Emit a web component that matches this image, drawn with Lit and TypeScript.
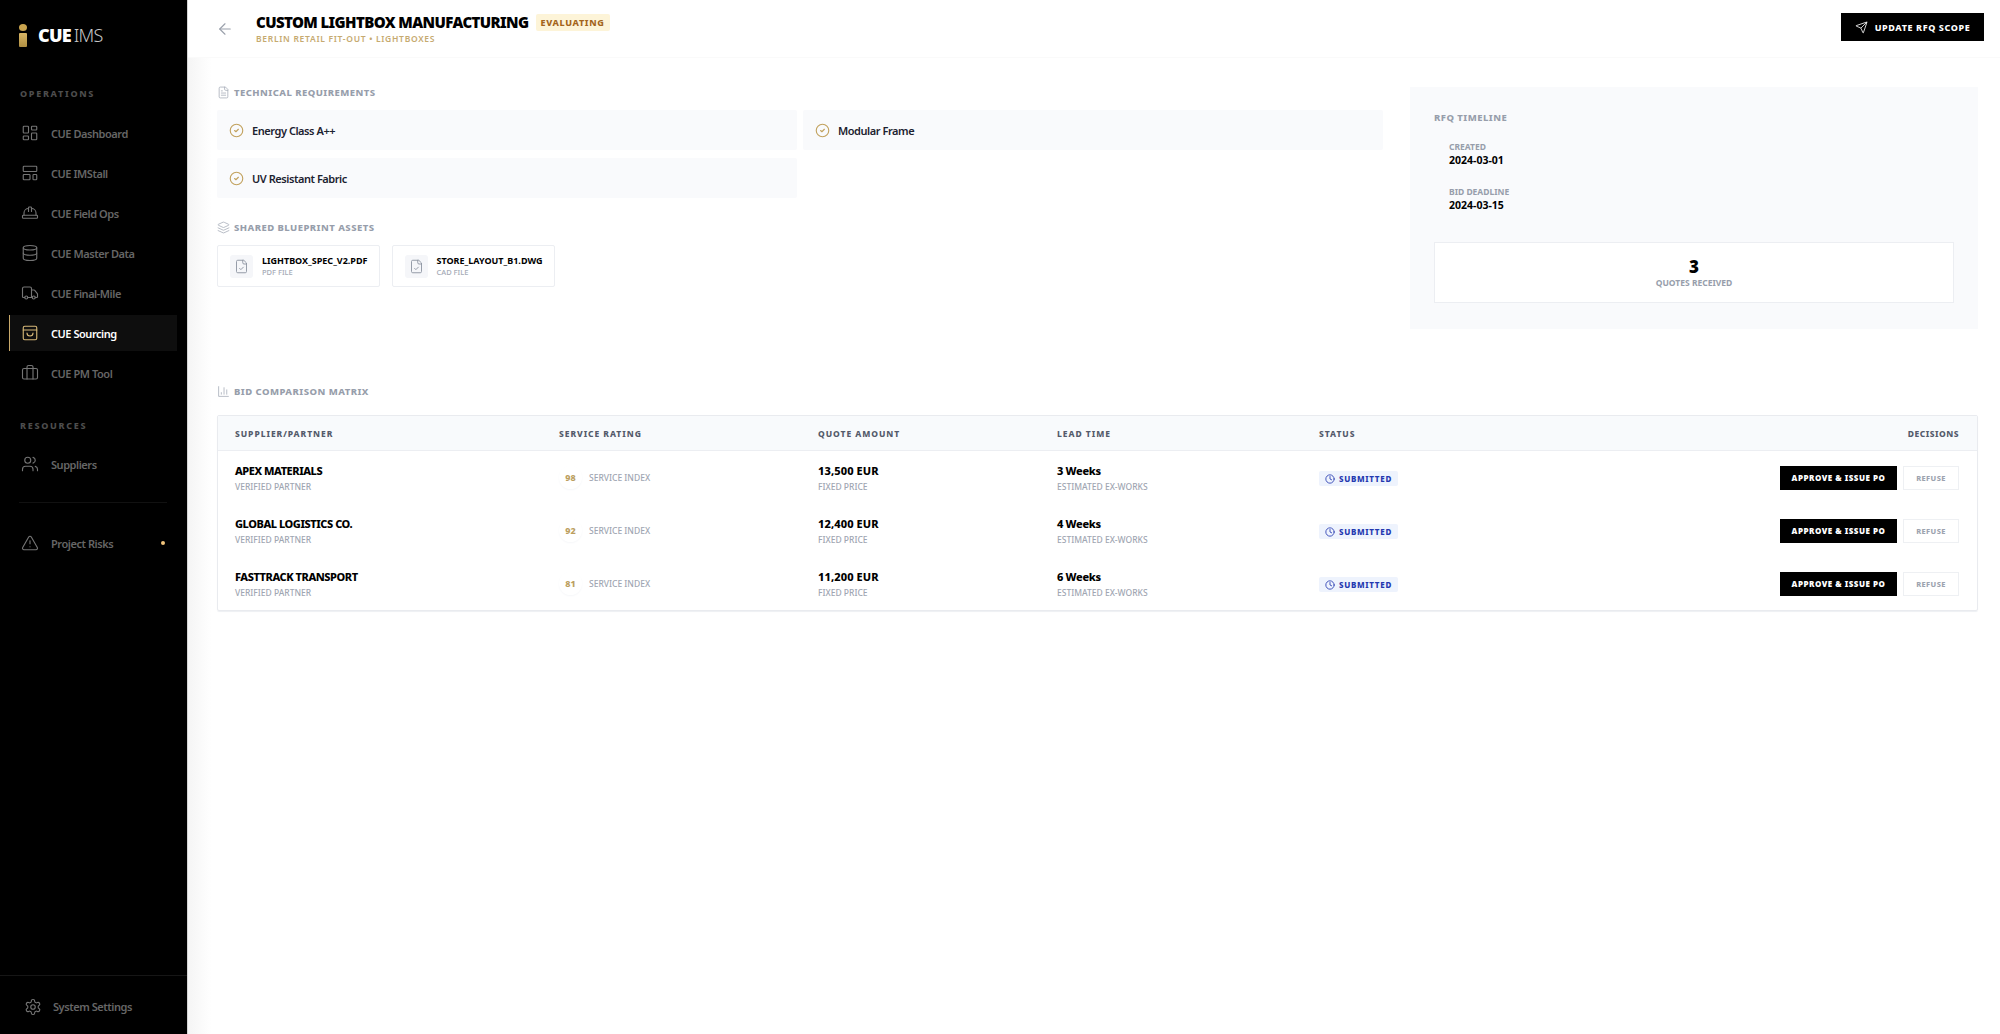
import { LitElement, html, css, svg } from 'lit';
import { customElement } from 'lit/decorators.js';

const icon = (body: unknown, size = 16, sw = 1.5) => html`
  <svg width=${size} height=${size} viewBox="0 0 24 24" fill="none" stroke="currentColor"
    stroke-width=${sw} stroke-linecap="round" stroke-linejoin="round">${body}</svg>
`;

const ICONS = {
  dashboard: svg`<rect x="3" y="3" width="7" height="9" rx="1"/><rect x="14" y="3" width="7" height="5" rx="1"/><rect x="14" y="12" width="7" height="9" rx="1"/><rect x="3" y="16" width="7" height="5" rx="1"/>`,
  stall: svg`<rect x="3" y="3" width="18" height="7" rx="1"/><rect x="3" y="14" width="9" height="7" rx="1"/><rect x="16" y="14" width="5" height="7" rx="1"/>`,
  hat: svg`<path d="M2 18a1 1 0 0 0 1 1h18a1 1 0 0 0 1-1v-2a1 1 0 0 0-1-1H3a1 1 0 0 0-1 1z"/><path d="M10 10V5a1 1 0 0 1 1-1h2a1 1 0 0 1 1 1v5"/><path d="M4 15v-3a6 6 0 0 1 6-6"/><path d="M14 6a6 6 0 0 1 6 6v3"/>`,
  database: svg`<ellipse cx="12" cy="5" rx="9" ry="3"/><path d="M3 5v14a9 3 0 0 0 18 0V5"/><path d="M3 12a9 3 0 0 0 18 0"/>`,
  truck: svg`<path d="M14 18V6a2 2 0 0 0-2-2H4a2 2 0 0 0-2 2v11a1 1 0 0 0 1 1h2"/><path d="M15 18H9"/><path d="M19 18h2a1 1 0 0 0 1-1v-3.65a1 1 0 0 0-.22-.62l-3.48-4.35A1 1 0 0 0 17.52 8H14"/><circle cx="17" cy="18" r="2"/><circle cx="7" cy="18" r="2"/>`,
  bag: svg`<rect x="3" y="3" width="18" height="18" rx="2"/><path d="M3 8h18"/><path d="M16 12a4 4 0 0 1-8 0"/>`,
  briefcase: svg`<path d="M16 20V4a2 2 0 0 0-2-2h-4a2 2 0 0 0-2 2v16"/><rect x="2" y="6" width="20" height="14" rx="2"/>`,
  users: svg`<path d="M16 21v-2a4 4 0 0 0-4-4H6a4 4 0 0 0-4 4v2"/><circle cx="9" cy="7" r="4"/><path d="M22 21v-2a4 4 0 0 0-3-3.87"/><path d="M16 3.13a4 4 0 0 1 0 7.75"/>`,
  warning: svg`<path d="m21.73 18-8-14a2 2 0 0 0-3.48 0l-8 14A2 2 0 0 0 4 21h16a2 2 0 0 0 1.73-3"/><path d="M12 9v4"/><path d="M12 17h.01"/>`,
  gear: svg`<path d="M12.22 2h-.44a2 2 0 0 0-2 2v.18a2 2 0 0 1-1 1.73l-.43.25a2 2 0 0 1-2 0l-.15-.08a2 2 0 0 0-2.73.73l-.22.38a2 2 0 0 0 .73 2.73l.15.1a2 2 0 0 1 1 1.72v.51a2 2 0 0 1-1 1.74l-.15.09a2 2 0 0 0-.73 2.73l.22.38a2 2 0 0 0 2.73.73l.15-.08a2 2 0 0 1 2 0l.43.25a2 2 0 0 1 1 1.73V20a2 2 0 0 0 2 2h.44a2 2 0 0 0 2-2v-.18a2 2 0 0 1 1-1.73l.43-.25a2 2 0 0 1 2 0l.15.08a2 2 0 0 0 2.73-.73l.22-.39a2 2 0 0 0-.73-2.73l-.15-.08a2 2 0 0 1-1-1.74v-.5a2 2 0 0 1 1-1.74l.15-.09a2 2 0 0 0 .73-2.73l-.22-.38a2 2 0 0 0-2.73-.73l-.15.08a2 2 0 0 1-2 0l-.43-.25a2 2 0 0 1-1-1.73V4a2 2 0 0 0-2-2z"/><circle cx="12" cy="12" r="3"/>`,
  arrow: svg`<path d="m12 19-7-7 7-7"/><path d="M19 12H5"/>`,
  send: svg`<path d="M14.536 21.686a.5.5 0 0 0 .937-.024l6.5-19a.496.496 0 0 0-.635-.635l-19 6.5a.5.5 0 0 0-.024.937l7.93 3.18a2 2 0 0 1 1.112 1.11z"/><path d="m21.854 2.147-10.94 10.939"/>`,
  fileText: svg`<path d="M15 2H6a2 2 0 0 0-2 2v16a2 2 0 0 0 2 2h12a2 2 0 0 0 2-2V7Z"/><path d="M14 2v4a2 2 0 0 0 2 2h4"/><path d="M10 9H8"/><path d="M16 13H8"/><path d="M16 17H8"/>`,
  fileCheck: svg`<path d="M15 2H6a2 2 0 0 0-2 2v16a2 2 0 0 0 2 2h12a2 2 0 0 0 2-2V7Z"/><path d="M14 2v4a2 2 0 0 0 2 2h4"/><path d="m9 15 2 2 4-4"/>`,
  layers: svg`<path d="m12.83 2.18a2 2 0 0 0-1.66 0L2.6 6.08a1 1 0 0 0 0 1.83l8.58 3.91a2 2 0 0 0 1.66 0l8.58-3.9a1 1 0 0 0 0-1.83Z"/><path d="m22 17.65-9.17 4.16a2 2 0 0 1-1.66 0L2 17.65"/><path d="m22 12.65-9.17 4.16a2 2 0 0 1-1.66 0L2 12.65"/>`,
  chart: svg`<path d="M3 3v18h18"/><path d="M18 17V9"/><path d="M13 17V5"/><path d="M8 17v-3"/>`,
  check: svg`<circle cx="12" cy="12" r="10"/><path d="m9 12 2 2 4-4"/>`,
  clock: svg`<circle cx="12" cy="12" r="10"/><path d="M12 6v6l4 2"/>`,
};

const OPERATIONS = [
  { label: 'CUE Dashboard', icon: ICONS.dashboard },
  { label: 'CUE IMStall', icon: ICONS.stall },
  { label: 'CUE Field Ops', icon: ICONS.hat },
  { label: 'CUE Master Data', icon: ICONS.database },
  { label: 'CUE Final-Mile', icon: ICONS.truck },
  { label: 'CUE Sourcing', icon: ICONS.bag, active: true },
  { label: 'CUE PM Tool', icon: ICONS.briefcase },
];

const BIDS = [
  { name: 'APEX MATERIALS', score: 98, amount: '13,500 EUR', lead: '3 Weeks' },
  { name: 'GLOBAL LOGISTICS CO.', score: 92, amount: '12,400 EUR', lead: '4 Weeks' },
  { name: 'FASTTRACK TRANSPORT', score: 81, amount: '11,200 EUR', lead: '6 Weeks' },
];

@customElement('app-root')
export class AppRoot extends LitElement {
  static styles = css`
    :host {
      display: flex;
      width: 2000px;
      height: 1034px;
      overflow: hidden;
      background: #fff;
      color: #000;
      font-family: 'Noto Sans', 'Open Sans', sans-serif;
    }
    svg { display: block; flex-shrink: 0; }

    .sidebar {
      width: 168px;
      height: 100%;
      flex-shrink: 0;
      background: #000;
      border-right: 1px solid #d4d4d4;
      display: flex;
      flex-direction: column;
      padding: 0 10px 0 9px;
    }
    .logo {
      height: 70px;
      padding: 0 0 0 10px;
      display: flex;
      align-items: center;
      gap: 11px;
      color: #fff;
      font-size: 18px;
      line-height: 1;
      letter-spacing: -0.8px;
    }
    .logo b { font-weight: 900; }
    .logo span { font-weight: 300; color: #c8c8c8; margin-left: 3px; }
    .mark { display: flex; flex-direction: column; align-items: center; gap: 2px; width: 8px; }
    .mark i { display: block; width: 8px; height: 7px; border-radius: 50%; background: #c9a44f; }
    .mark u { display: block; width: 8px; height: 14px; border-radius: 1px; background: linear-gradient(#d8b665, #b08f42); }
    .group {
      margin: 17px 0 14px 11px;
      font-size: 9px;
      line-height: 14px;
      font-weight: 800;
      letter-spacing: 1.7px;
      color: #4d4d4d;
    }
    .group.res { margin-top: 24px; margin-bottom: 13px; }
    .nav {
      height: 36px;
      margin-bottom: 4px;
      padding-left: 11px;
      display: flex;
      align-items: center;
      gap: 12px;
      font-size: 11px;
      letter-spacing: -0.45px;
      font-weight: 600;
      color: #666;
      border-left: 1px solid transparent;
    }
    .nav svg { color: #757575; }
    .nav.active { background: #0e0e0e; color: #fff; border-left-color: #c9a96a; }
    .nav.active svg { color: #d6b878; }
    .nav .dot { width: 4px; height: 4px; border-radius: 50%; background: #f2c57c; margin-left: auto; margin-right: 12px; }
    .rule { height: 1px; background: #111; margin: 16px 10px 22px; }
    .settings {
      margin: auto -10px 0 -9px;
      height: 59px;
      box-sizing: border-box;
      border-top: 1px solid #161616;
      padding: 3px 0 0 24px;
      display: flex;
      align-items: center;
      gap: 11px;
      font-size: 11px;
      letter-spacing: -0.45px;
      font-weight: 600;
      color: #666;
    }
    .settings svg { color: #757575; }

    main {
      flex: 1;
      min-width: 0;
      display: flex;
      flex-direction: column;
      background: linear-gradient(90deg, #f5f5f5 0, #fff 24px);
    }
    header {
      height: 58px;
      flex-shrink: 0;
      box-sizing: border-box;
      padding: 0 16px 0 28px;
      border-bottom: 1px solid #fafafa;
      display: flex;
      align-items: center;
      background: #fff;
    }
    .back { color: #9aa0ab; margin-right: 22px; }
    .title-row { display: flex; align-items: center; gap: 7px; }
    h1 {
      margin: 0;
      font-size: 15px;
      line-height: 20px;
      font-weight: 900;
      letter-spacing: -0.6px;
    }
    .badge {
      padding: 0 5px;
      height: 17px;
      line-height: 17px;
      border-radius: 2px;
      background: #fdf4d8;
      color: #a3641c;
      font-size: 9px;
      font-weight: 800;
      letter-spacing: 0.65px;
    }
    .sub {
      margin-top: 1px;
      font-size: 8.5px;
      line-height: 12px;
      font-weight: 600;
      letter-spacing: 0.7px;
      color: #c6aa70;
    }
    .update {
      margin-left: auto;
      width: 143px;
      height: 28px;
      margin-top: -3px;
      background: #000;
      color: #fff;
      display: flex;
      align-items: center;
      justify-content: center;
      gap: 7px;
      font-size: 9px;
      font-weight: 800;
      letter-spacing: 0.6px;
    }

    .content { padding: 28px 22px 0 29px; }
    .top { display: flex; gap: 28px; align-items: flex-start; }
    .left { width: 1165px; flex-shrink: 0; }
    .label {
      display: flex;
      align-items: center;
      gap: 4px;
      height: 12px;
      font-size: 9.5px;
      font-weight: 800;
      letter-spacing: 0.45px;
      color: #979eab;
    }
    .label svg { color: #a9afba; }
    .reqs { display: grid; grid-template-columns: 580px 580px; gap: 8px 6px; margin-top: 12px; }
    .req {
      height: 40px;
      padding-left: 12px;
      display: flex;
      align-items: center;
      gap: 8px;
      border-radius: 2px;
      background: #f9fafc;
      font-size: 11px;
      letter-spacing: -0.45px;
      font-weight: 600;
      color: #1c2230;
    }
    .req svg { color: #c2a25e; }
    .label.assets { margin-top: 23px; }
    .files { display: flex; gap: 12px; margin-top: 12px; }
    .file {
      height: 42px;
      box-sizing: border-box;
      padding: 0 11px 0 12px;
      border: 1px solid #eceef2;
      border-radius: 2px;
      display: flex;
      align-items: center;
      gap: 9px;
    }
    .file-icon {
      width: 23px;
      height: 23px;
      border-radius: 3px;
      background: #f5f6f9;
      color: #8f96a3;
      display: flex;
      align-items: center;
      justify-content: center;
    }
    .file b { display: block; font-size: 9px; line-height: 13px; font-weight: 700; }
    .file span { display: block; font-size: 7.5px; line-height: 11px; font-weight: 500; color: #a5abb6; }

    .panel {
      width: 568px;
      height: 242px;
      margin-top: 1px;
      box-sizing: border-box;
      padding: 24px 24px 0;
      background: #f9fafc;
    }
    .panel h3 {
      margin: 0;
      font-size: 9.5px;
      line-height: 13px;
      font-weight: 800;
      letter-spacing: 0.45px;
      color: #979eab;
    }
    .dates { margin: 17px 0 0 15px; }
    .dates small { display: block; font-size: 8.5px; line-height: 12px; font-weight: 700; color: #979eab; }
    .dates b { display: block; font-size: 10.5px; line-height: 15px; font-weight: 700; margin-bottom: 18px; }
    .count {
      margin-top: 29px;
      height: 61px;
      box-sizing: border-box;
      padding-top: 13px;
      background: #fff;
      border: 1px solid #eceef2;
      text-align: center;
    }
    .count b { display: block; font-size: 17px; line-height: 21px; font-weight: 900; }
    .count span { display: block; font-size: 8.5px; line-height: 12px; font-weight: 700; color: #979eab; }

    .label.bids { margin-top: 56px; }
    .table {
      margin-top: 18px;
      width: 1761px;
      box-sizing: border-box;
      border: 1px solid #e9ebef;
      border-radius: 2px;
      box-shadow: 0 1px 1px #eef0f3;
    }
    .row {
      display: grid;
      grid-template-columns: 324px 259px 239px 262px 1fr auto;
      align-items: center;
      box-sizing: border-box;
      height: 53px;
      padding: 0 18px 0 17px;
    }
    .row.head {
      height: 35px;
      background: #f8fafc;
      border-bottom: 1px solid #eceef2;
      font-size: 8.5px;
      font-weight: 800;
      letter-spacing: 0.95px;
      color: #545b6b;
    }
    .dec { letter-spacing: 0.5px; }
    .strong { display: block; font-size: 11px; line-height: 15px; font-weight: 800; letter-spacing: -0.3px; }
    .strong.name { letter-spacing: -0.45px; }
    .strong.amount { letter-spacing: 0.1px; }
    .muted { display: block; margin-top: 3px; font-size: 8.5px; line-height: 12px; font-weight: 500; color: #a0a6b2; }
    .rating { display: flex; align-items: center; gap: 7px; font-size: 8.5px; font-weight: 500; color: #a0a6b2; }
    .score {
      width: 23px;
      height: 23px;
      border-radius: 50%;
      background: #fff;
      box-shadow: 0 1px 2px #f6f7f9;
      display: flex;
      align-items: center;
      justify-content: center;
      font-size: 9px;
      font-weight: 800;
      color: #bc9f5f;
    }
    .status {
      display: inline-flex;
      align-items: center;
      gap: 4px;
      height: 15px;
      padding: 0 6px;
      border-radius: 2px;
      background: #eef3fd;
      color: #2438b0;
      font-size: 8px;
      font-weight: 800;
      letter-spacing: 0.7px;
    }
    .actions { display: flex; justify-content: flex-end; gap: 6px; }
    .approve, .refuse {
      height: 24px;
      display: flex;
      align-items: center;
      justify-content: center;
      font-size: 8px;
      font-weight: 900;
      letter-spacing: 0.5px;
    }
    .approve { width: 117px; background: #000; color: #fff; }
    .refuse {
      width: 56px;
      box-sizing: border-box;
      border: 1px solid #eef0f3;
      color: #9ca3af;
      font-size: 7.5px;
      font-weight: 800;
      letter-spacing: 0.4px;
    }
  `;

  private renderNav(label: string, body: unknown, active = false, dot = false) {
    return html`
      <div class="nav ${active ? 'active' : ''}">
        ${icon(body, 18)}<span>${label}</span>
        ${dot ? html`<i class="dot"></i>` : ''}
      </div>
    `;
  }

  private renderSidebar() {
    return html`
      <aside class="sidebar">
        <div class="logo">
          <div class="mark"><i></i><u></u></div>
          <div><b>CUE</b><span>IMS</span></div>
        </div>
        <div class="group">OPERATIONS</div>
        ${OPERATIONS.map((n) => this.renderNav(n.label, n.icon, n.active))}
        <div class="group res">RESOURCES</div>
        ${this.renderNav('Suppliers', ICONS.users)}
        <div class="rule"></div>
        ${this.renderNav('Project Risks', ICONS.warning, false, true)}
        <div class="settings">${icon(ICONS.gear, 18)}<span>System Settings</span></div>
      </aside>
    `;
  }

  private renderBid(b: (typeof BIDS)[number]) {
    return html`
      <div class="row">
        <div><span class="strong name">${b.name}</span><span class="muted">VERIFIED PARTNER</span></div>
        <div class="rating"><span class="score">${b.score}</span>SERVICE INDEX</div>
        <div><span class="strong amount">${b.amount}</span><span class="muted">FIXED PRICE</span></div>
        <div><span class="strong">${b.lead}</span><span class="muted">ESTIMATED EX-WORKS</span></div>
        <div><span class="status">${icon(ICONS.clock, 10, 2)}SUBMITTED</span></div>
        <div class="actions">
          <div class="approve">APPROVE &amp; ISSUE PO</div>
          <div class="refuse">REFUSE</div>
        </div>
      </div>
    `;
  }

  render() {
    return html`
      ${this.renderSidebar()}
      <main>
        <header>
          <div class="back">${icon(ICONS.arrow, 18)}</div>
          <div>
            <div class="title-row">
              <h1>CUSTOM LIGHTBOX MANUFACTURING</h1>
              <span class="badge">EVALUATING</span>
            </div>
            <div class="sub">BERLIN RETAIL FIT-OUT • LIGHTBOXES</div>
          </div>
          <div class="update">${icon(ICONS.send, 13)}UPDATE RFQ SCOPE</div>
        </header>
        <div class="content">
          <div class="top">
            <div class="left">
              <div class="label">${icon(ICONS.fileText, 13)}TECHNICAL REQUIREMENTS</div>
              <div class="reqs">
                ${['Energy Class A++', 'Modular Frame', 'UV Resistant Fabric'].map(
                  (r) => html`<div class="req">${icon(ICONS.check, 15, 1.8)}${r}</div>`
                )}
              </div>
              <div class="label assets">${icon(ICONS.layers, 13)}SHARED BLUEPRINT ASSETS</div>
              <div class="files">
                <div class="file">
                  <div class="file-icon">${icon(ICONS.fileCheck, 15)}</div>
                  <div><b>LIGHTBOX_SPEC_V2.PDF</b><span>PDF FILE</span></div>
                </div>
                <div class="file">
                  <div class="file-icon">${icon(ICONS.fileCheck, 15)}</div>
                  <div><b>STORE_LAYOUT_B1.DWG</b><span>CAD FILE</span></div>
                </div>
              </div>
            </div>
            <section class="panel">
              <h3>RFQ TIMELINE</h3>
              <div class="dates">
                <small>CREATED</small><b>2024-03-01</b>
                <small>BID DEADLINE</small><b>2024-03-15</b>
              </div>
              <div class="count"><b>3</b><span>QUOTES RECEIVED</span></div>
            </section>
          </div>
          <div class="label bids">${icon(ICONS.chart, 13)}BID COMPARISON MATRIX</div>
          <div class="table">
            <div class="row head">
              <div>SUPPLIER/PARTNER</div><div>SERVICE RATING</div><div>QUOTE AMOUNT</div>
              <div>LEAD TIME</div><div>STATUS</div><div class="dec">DECISIONS</div>
            </div>
            ${BIDS.map((b) => this.renderBid(b))}
          </div>
        </div>
      </main>
    `;
  }
}
